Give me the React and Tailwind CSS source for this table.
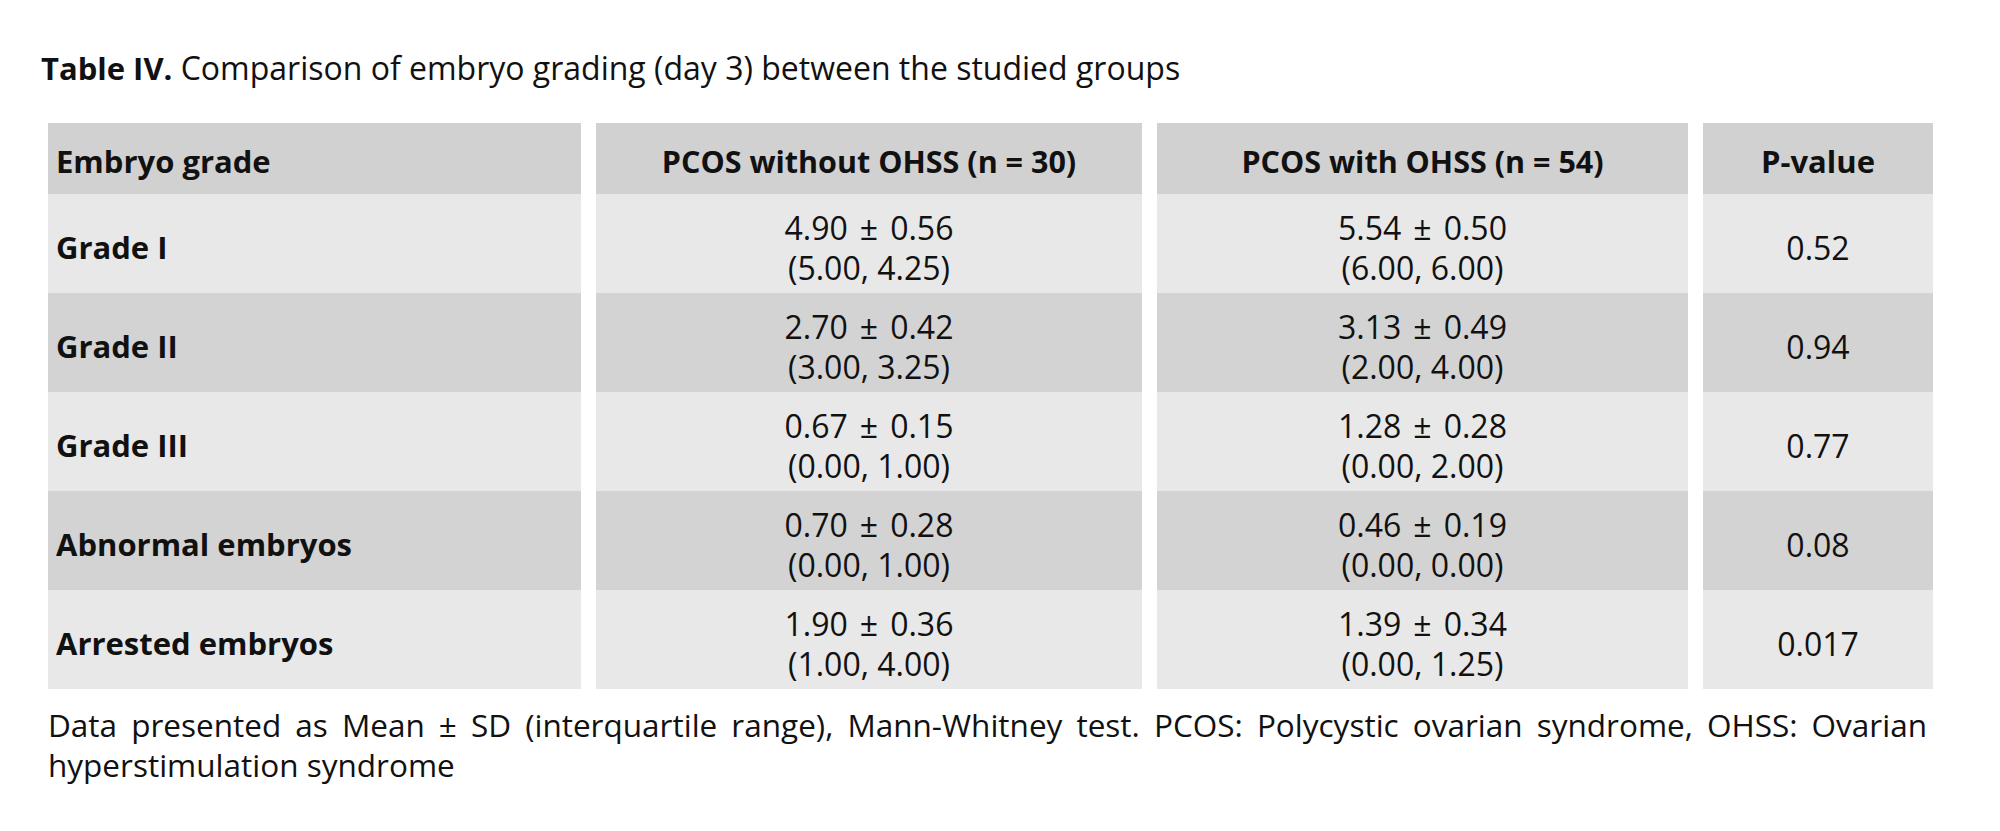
import React from 'react';

const rows = [
    { grade: 'Grade I', a: ['4.90', '0.56', '(5.00, 4.25)'], b: ['5.54', '0.50', '(6.00, 6.00)'], p: '0.52' },
    { grade: 'Grade II', a: ['2.70', '0.42', '(3.00, 3.25)'], b: ['3.13', '0.49', '(2.00, 4.00)'], p: '0.94' },
    { grade: 'Grade III', a: ['0.67', '0.15', '(0.00, 1.00)'], b: ['1.28', '0.28', '(0.00, 2.00)'], p: '0.77' },
    { grade: 'Abnormal embryos', a: ['0.70', '0.28', '(0.00, 1.00)'], b: ['0.46', '0.19', '(0.00, 0.00)'], p: '0.08' },
    { grade: 'Arrested embryos', a: ['1.90', '0.36', '(1.00, 4.00)'], b: ['1.39', '0.34', '(0.00, 1.25)'], p: '0.017' },
];

const Value = ({ v }) => (
    <div className="flex flex-col items-center justify-center leading-[40px]">
        <span className="flex items-center gap-x-[12px]">
            <span>{v[0]}</span>
            <span>±</span>
            <span>{v[1]}</span>
        </span>
        <span>{v[2]}</span>
    </div>
);

const App = () => {
    return (
        <div className="w-[2000px] h-[831px] bg-white text-[#111] font-['Open_Sans',sans-serif]">
            <div className="pt-[48px] pl-[41px] text-[32px] leading-[40px]">
                <span className="font-bold text-[31px]">Table IV.</span> Comparison of embryo grading (day 3) between the studied groups
            </div>

            <div className="ml-[48px] mt-[35px] grid grid-cols-[533px_546px_531px_230px] gap-x-[15px] text-[32px]">
                <div className="h-[71px] pt-[6px] bg-[#d1d1d1] flex items-center pl-[8px] font-bold text-[31px]">Embryo grade</div>
                <div className="h-[71px] pt-[6px] bg-[#d1d1d1] flex items-center justify-center font-bold text-[30.5px]">PCOS without OHSS (n = 30)</div>
                <div className="h-[71px] pt-[6px] bg-[#d1d1d1] flex items-center justify-center font-bold text-[30.5px]">PCOS with OHSS (n = 54)</div>
                <div className="h-[71px] pt-[6px] bg-[#d1d1d1] flex items-center justify-center font-bold text-[31px]">P-value</div>

                {rows.map((row, index) => {
                    const bg = index % 2 === 0 ? 'bg-[#e8e8e8]' : 'bg-[#d3d3d3]';
                    return (
                        <React.Fragment key={index}>
                            <div className={`h-[99px] pt-[8px] ${bg} flex items-center pl-[8px] font-bold text-[31px]`}>{row.grade}</div>
                            <div className={`h-[99px] pt-[8px] ${bg} flex items-center justify-center`}>
                                <Value v={row.a} />
                            </div>
                            <div className={`h-[99px] pt-[8px] ${bg} flex items-center justify-center`}>
                                <Value v={row.b} />
                            </div>
                            <div className={`h-[99px] pt-[8px] ${bg} flex items-center justify-center`}>{row.p}</div>
                        </React.Fragment>
                    );
                })}
            </div>

            <p className="ml-[48px] mt-[16px] w-[1879px] text-[31.5px] leading-[40px] text-justify">
                Data presented as Mean ± SD (interquartile range), Mann-Whitney test. PCOS: Polycystic ovarian syndrome, OHSS: Ovarian hyperstimulation syndrome
            </p>
        </div>
    );
};

export default App;
